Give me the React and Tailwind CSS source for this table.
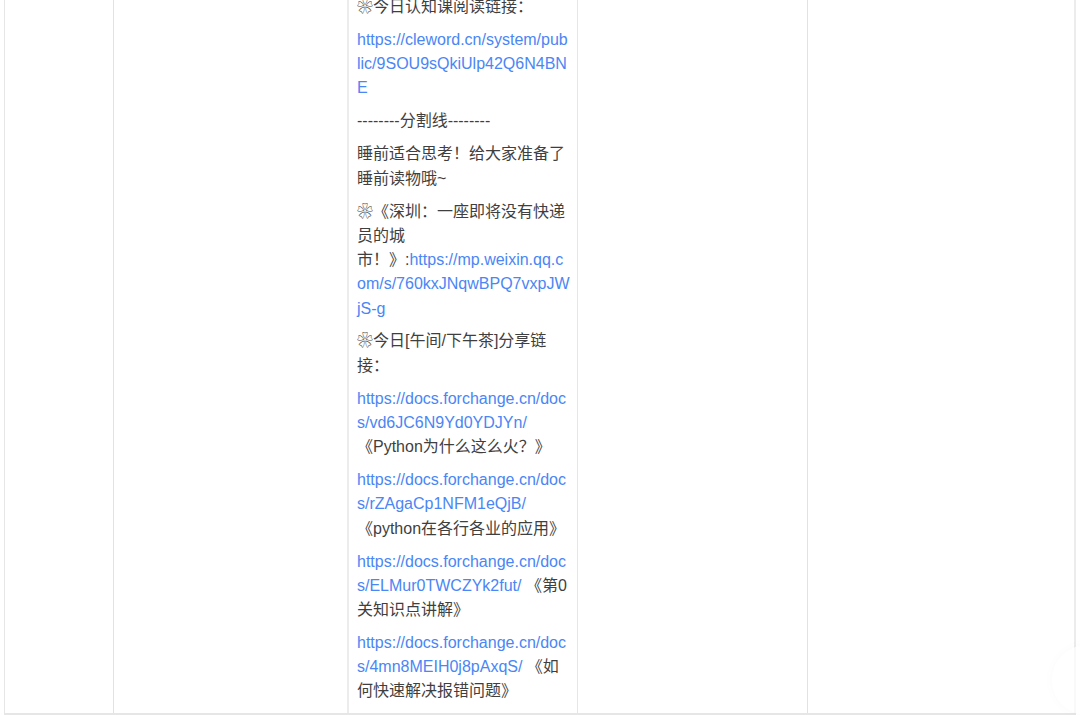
import React from "react";

const blue = "text-[#4a86f5]";

// 第三列的文章内容，link 为蓝色链接部分
const paragraphs = [
    [{ t: "❀今日认知课阅读链接：" }],
    [{ t: "https://cleword.cn/system/public/9SOU9sQkiUlp42Q6N4BNE", link: true }],
    [{ t: "--------分割线--------" }],
    [{ t: "睡前适合思考！给大家准备了睡前读物哦~" }],
    [
        { t: "❀《深圳：一座即将没有快递员的城" },
        { br: true },
        { t: "市！》:" },
        { t: "https://mp.weixin.qq.com/s/760kxJNqwBPQ7vxpJWjS-g", link: true },
    ],
    [{ t: "❀今日[午间/下午茶]分享链接：" }],
    [
        { t: "https://docs.forchange.cn/docs/vd6JC6N9Yd0YDJYn/", link: true },
        { t: " 《Python为什么这么火？》" },
    ],
    [
        { t: "https://docs.forchange.cn/docs/rZAgaCp1NFM1eQjB/", link: true },
        { t: " 《python在各行各业的应用》" },
    ],
    [
        { t: "https://docs.forchange.cn/docs/ELMur0TWCZYk2fut/", link: true },
        { t: " 《第0关知识点讲解》" },
    ],
    [
        { t: "https://docs.forchange.cn/docs/4mn8MEIH0j8pAxqS/", link: true },
        { t: " 《如何快速解决报错问题》" },
    ],
];

const App = () => {
    return (
        <div
            className="relative w-[1080px] h-[715px] overflow-hidden bg-white text-[16px] text-[#3f3f3f]"
            style={{ fontFamily: '"Liberation Sans", Arial, "Noto Sans CJK SC", sans-serif' }}
        >
            <div className="ml-[4px] -mt-[13px] w-[1072px] flex border-l border-b-2 border-[#e6e6e6]">
                <div className="w-[109px] shrink-0 border-r border-[#e2e2e2]"></div>
                <div className="w-[235px] shrink-0 border-r-2 border-[#ececec]"></div>
                <div className="w-[229px] shrink-0 border-r border-[#e6e6e6] pl-[8px] pr-[6.5px] pt-[8px] pb-[9px]">
                    {paragraphs.map((p, i) => (
                        <p key={i} className="leading-[24.25px] mb-[8.7px] last:mb-0 [overflow-wrap:anywhere]">
                            {p.map((s, j) =>
                                s.br ? (
                                    <br key={j} />
                                ) : (
                                    <span key={j} className={s.link ? blue : ""}>
                                        {s.t}
                                    </span>
                                )
                            )}
                        </p>
                    ))}
                </div>
                <div className="w-[230px] shrink-0 border-r border-[#e2e2e2]"></div>
                <div className="w-[268px] shrink-0 border-r-2 border-[#ececec]"></div>
            </div>
            {/* 右下角半隐藏的悬浮按钮 */}
            <div className="absolute left-[1052px] top-[645px] w-[70px] h-[70px] rounded-full bg-white/70 shadow-[0_0_12px_rgba(0,0,0,0.025)]"></div>
        </div>
    );
};

export default App;
